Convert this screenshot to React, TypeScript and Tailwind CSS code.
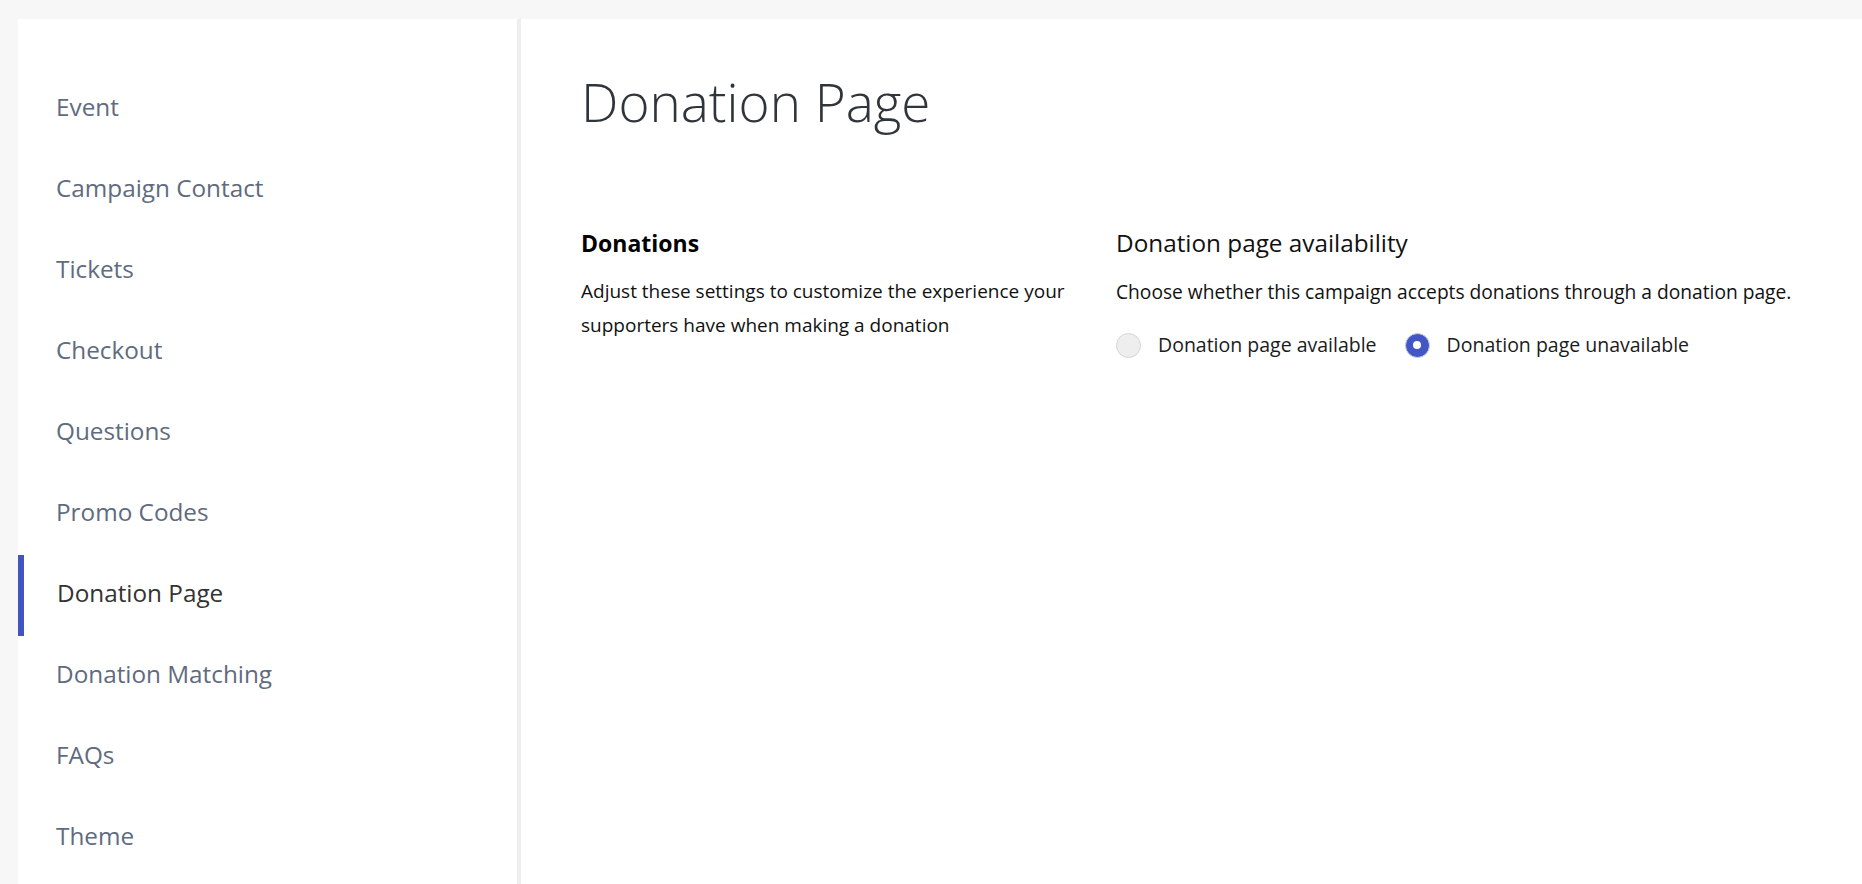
import React from "react";

const navItems = [
  "Event",
  "Campaign Contact",
  "Tickets",
  "Checkout",
  "Questions",
  "Promo Codes",
  "Donation Page",
  "Donation Matching",
  "FAQs",
  "Theme",
];

function Radio({ checked, label }: { checked: boolean; label: string }) {
  return (
    <label className="flex items-center">
      {checked ? (
        <span className="flex h-[25px] w-[25px] items-center justify-center rounded-full border border-[#cfd2dc] bg-[#4356c6]">
          <span className="h-[8px] w-[8px] rounded-full bg-white" />
        </span>
      ) : (
        <span className="h-[25px] w-[25px] rounded-full border border-[#d6d6d6] bg-[#eeeeee]" />
      )}
      <span className="ml-[17px] text-[19.5px] leading-[34px] text-[#1b1b1b]">{label}</span>
    </label>
  );
}

export default function App() {
  return (
    <div
      className="flex h-[884px] w-full overflow-hidden bg-[#f7f7f7] pt-[19px] pl-[18px]"
      style={{ fontFamily: '"Open Sans", "Noto Sans", sans-serif' }}
    >
      <aside className="w-[503px] shrink-0 border-r-4 border-[#eeeeee] bg-white pt-[50px]">
        <nav className="flex flex-col">
          {navItems.map((item) => {
            const active = item === "Donation Page";
            return (
              <div
                key={item}
                className={
                  active
                    ? "flex h-[81px] items-center border-l-[6px] border-[#4253c2] pb-[5px] pl-[33px] text-[24.3px] text-[#333333]"
                    : "flex h-[81px] items-center pb-[5px] pl-[38px] text-[24.3px] text-[#5f6b7e]"
                }
              >
                {item}
              </div>
            );
          })}
        </nav>
      </aside>
      <main className="flex-1 bg-white pt-[53px] pl-[60px]">
        <h1 className="text-[53px] font-light leading-[60px] text-[#30353b]">Donation Page</h1>
        <div className="mt-[95px] grid grid-cols-[535px_1fr]">
          <section>
            <h2 className="text-[23px] font-bold leading-[32px] text-black">Donations</h2>
            <p className="mt-[15px] max-w-[500px] text-[19px] leading-[34px] text-[#111111]">
              Adjust these settings to customize the experience your supporters have when making a donation
            </p>
          </section>
          <section>
            <h2 className="text-[24.3px] font-normal leading-[32px] text-[#111111]">Donation page availability</h2>
            <p className="mt-[16px] text-[19.2px] leading-[34px] text-[#111111]">
              Choose whether this campaign accepts donations through a donation page.
            </p>
            <div className="mt-[19px] flex items-center gap-[28px]">
              <Radio checked={false} label="Donation page available" />
              <Radio checked={true} label="Donation page unavailable" />
            </div>
          </section>
        </div>
      </main>
    </div>
  );
}
